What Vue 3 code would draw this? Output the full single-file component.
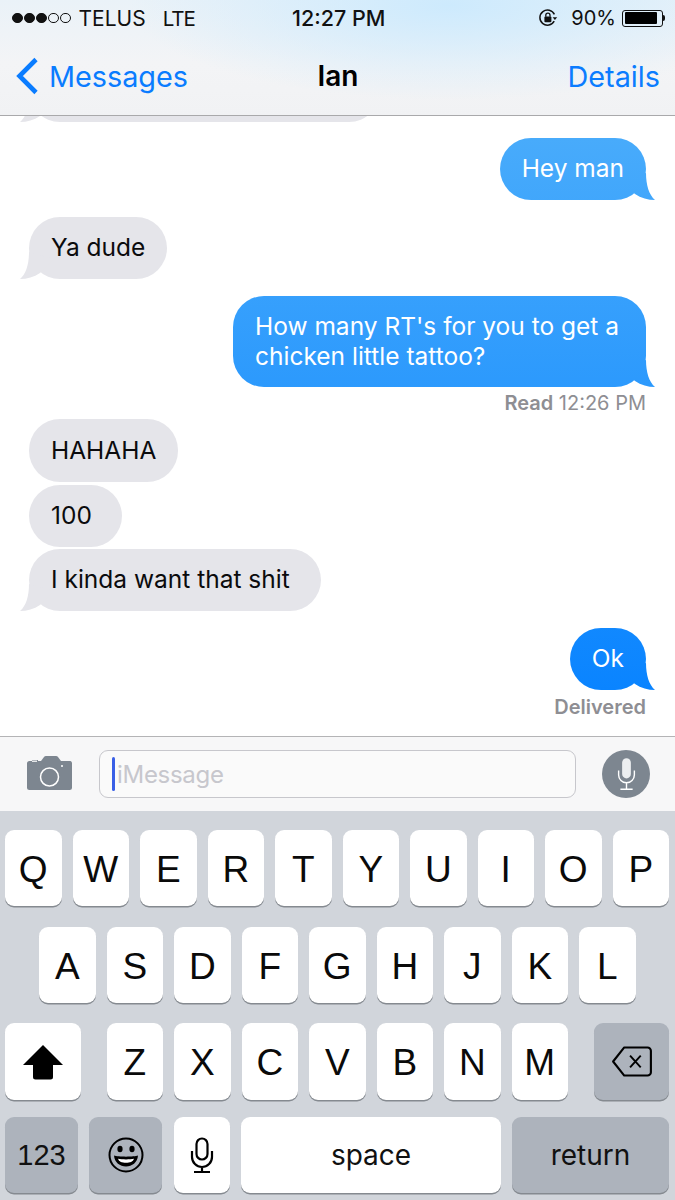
<script setup>
const row1 = ['Q','W','E','R','T','Y','U','I','O','P']
const row2 = ['A','S','D','F','G','H','J','K','L']
const row3 = ['Z','X','C','V','B','N','M']
</script>

<template>
  <div class="phone">
    <header class="top">
      <div class="status">
        <div class="status-left">
          <span class="signal">
            <i class="dot on"></i><i class="dot on"></i><i class="dot on"></i><i class="dot"></i><i class="dot"></i>
          </span>
          <span class="carrier">TELUS</span>
          <span class="lte">LTE</span>
        </div>
        <div class="clock">12:27 PM</div>
        <div class="status-right">
          <svg class="lock" width="20" height="20" viewBox="0 0 20 20">
            <path d="M16.2 13.2A7.6 7.6 0 1 1 16.4 6.4" fill="none" stroke="#111" stroke-width="1.5"/>
            <path d="M14.6 9.2h4.6l-2.3 2.8z" fill="#111"/>
            <rect x="6.4" y="8.6" width="7" height="5.6" rx="1" fill="#111"/>
            <path d="M7.8 8.8V7.2a2.1 2.1 0 0 1 4.2 0v1.6" fill="none" stroke="#111" stroke-width="1.3"/>
          </svg>
          <span class="pct">90%</span>
          <span class="battery"><span class="level"></span></span>
          <span class="nub"></span>
        </div>
      </div>
      <nav class="nav">
        <div class="back">
          <svg width="24" height="38" viewBox="0 0 24 38">
            <path d="M21 2.5 4.5 19 21 35.5" fill="none" stroke="#0a7cff" stroke-width="4.6"/>
          </svg>
          <span>Messages</span>
        </div>
        <div class="title">Ian</div>
        <div class="details">Details</div>
      </nav>
    </header>

    <main class="messages">
      <div class="bubble them cut"></div>
      <div class="bubble me m-hey">Hey man</div>
      <div class="bubble them m-ya">Ya dude</div>
      <div class="bubble me m-many">How many RT's for you to get a<br>chicken little tattoo?</div>
      <div class="receipt m-read"><b>Read</b> 12:26 PM</div>
      <div class="bubble them plain m-ha">HAHAHA</div>
      <div class="bubble them plain m-100">100</div>
      <div class="bubble them m-kinda">I kinda want that shit</div>
      <div class="bubble me m-ok">Ok</div>
      <div class="receipt m-del"><b>Delivered</b></div>
    </main>

    <section class="composer">
      <svg class="camera" width="45" height="34" viewBox="0 0 45 34">
        <path d="M2.500 5H5V4h6v1h3l3-4q.6-1 2-1h10q1.400 0 2 1l3 4h9.500A2.500 2.500 0 0 1 45 7.500v24a2.500 2.500 0 0 1-2.500 2.500h-40A2.500 2.500 0 0 1 0 31.500v-24A2.500 2.500 0 0 1 2.500 5z" fill="#7d8690"/>
        <rect x="5" y="4.600" width="5" height="1.200" fill="#fff"/>
        <circle cx="22.500" cy="21" r="9" fill="none" stroke="#fff" stroke-width="1.500"/>
        <circle cx="35" cy="10" r="1" fill="#fff"/>
      </svg>
      <div class="field">
        <span class="caret"></span>
        <span class="placeholder">iMessage</span>
      </div>
      <div class="voice">
        <svg width="21" height="34" viewBox="0 0 24 38">
          <rect x="7" y="1" width="10" height="23" rx="5" fill="#eceef0"/>
          <path d="M3 15v5a9 9 0 0 0 18 0v-5M12 29v7M5 36.500h14" fill="none" stroke="#fff" stroke-width="1.600"/>
        </svg>
      </div>
    </section>

    <section class="keyboard">
      <div class="row r1">
        <div v-for="k in row1" :key="k" class="key letter">{{ k }}</div>
      </div>
      <div class="row r2">
        <div v-for="k in row2" :key="k" class="key letter">{{ k }}</div>
      </div>
      <div class="row r3">
        <div class="key shift">
          <svg width="40" height="36" viewBox="0 0 40 36">
            <path d="M20 1 40 21H30v12a2.500 2.500 0 0 1-2.500 2.500h-15A2.500 2.500 0 0 1 10 33V21H0z" fill="#000"/>
          </svg>
        </div>
        <div class="letters">
          <div v-for="k in row3" :key="k" class="key letter">{{ k }}</div>
        </div>
        <div class="key dark del">
          <svg width="42" height="31" viewBox="0 0 42 32">
            <path d="M13 1.500h24a3.500 3.500 0 0 1 3.500 3.500v22a3.500 3.500 0 0 1-3.500 3.500H13L1.500 16z" fill="none" stroke="#000" stroke-width="2.200" stroke-linejoin="round"/>
            <path d="M19 10 30 22M30 10 19 22" stroke="#000" stroke-width="2" fill="none"/>
          </svg>
        </div>
      </div>
      <div class="row r4">
        <div class="key dark num">123</div>
        <div class="key dark emoji">
          <svg width="36" height="36" viewBox="0 0 36 36">
            <circle cx="18" cy="18" r="16.500" fill="none" stroke="#000" stroke-width="2"/>
            <ellipse cx="12" cy="12" rx="2.600" ry="3.300" fill="#000"/>
            <ellipse cx="24" cy="12" rx="2.600" ry="3.300" fill="#000"/>
            <path d="M6 18.500c4 1.500 20 1.500 24 0-.5 7-6 11-12 11s-11.500-4-12-11z" fill="#000"/>
            <path d="M10 21.800c4 .8 12 .8 16 0-1 3-4 4-8 4s-7-1-8-4z" fill="#fff"/>
          </svg>
        </div>
        <div class="key mic">
          <svg width="24" height="36" viewBox="0 0 24 36">
            <rect x="6.500" y="1.500" width="11" height="21" rx="5.500" fill="none" stroke="#000" stroke-width="2.200"/>
            <path d="M2 14v6a10 10 0 0 0 20 0v-6M12 30v5M4 35h16" fill="none" stroke="#000" stroke-width="2.200"/>
          </svg>
        </div>
        <div class="key space">space</div>
        <div class="key dark ret">return</div>
      </div>
    </section>
  </div>
</template>

<style>
html, body { margin: 0; background: #fff; }
</style>

<style scoped>
.phone {
  width: 675px;
  height: 1200px;
  overflow: hidden;
  display: flex;
  flex-direction: column;
  font-family: Inter, "Liberation Sans", sans-serif;
  color: #000;
  background: #fff;
}

/* top bar */
.top {
  height: 115px;
  flex: none;
  border-bottom: 1px solid #a9a9ab;
  background:
    radial-gradient(ellipse 320px 95px at 450px 5px, #cdeafd 0%, rgba(205,234,253,0) 100%),
    linear-gradient(#eaf2f8, #f3f4f6 55%, #f1f2f4);
  position: relative;
  z-index: 2;
}
.status {
  height: 36px;
  display: flex;
  align-items: center;
  justify-content: space-between;
  padding: 0 10px 0 12px;
  position: relative;
  font-size: 20px;
  color: #111;
}
.status-left, .status-right { display: flex; align-items: center; }
.signal { display: flex; gap: 1.500px; margin-right: 8px; }
.dot {
  width: 10.500px;
  height: 10.500px;
  border-radius: 50%;
  box-sizing: border-box;
  border: 1px solid #111;
}
.dot.on { background: #111; }
.carrier { margin-right: 17px; font-size: 21px; }
.lte { font-size: 20.500px; letter-spacing: -1px; }
.clock {
  position: absolute;
  left: 292px;
  font-weight: 500;
  font-size: 21.500px;
}
.lock { margin-right: 13px; }
.pct { margin-right: 6px; }
.battery {
  width: 41px;
  height: 17px;
  box-sizing: border-box;
  border: 1px solid #111;
  border-radius: 3px;
  padding: 1.500px;
  display: flex;
}
.level { width: 90%; background: #000; border-radius: 1px; }
.nub { width: 2px; height: 6px; background: #111; border-radius: 0 2px 2px 0; }

.nav {
  height: 79px;
  box-sizing: border-box;
  padding: 1px 15px 0 15px;
  display: flex;
  align-items: center;
  justify-content: space-between;
  position: relative;
  color: #0a7cff;
  font-size: 28.800px;
}
.back { display: flex; align-items: center; gap: 10px; }
.title {
  position: absolute;
  left: 0;
  right: 0;
  margin-left: 1px;
  text-align: center;
  color: #000;
  font-weight: 600;
  font-size: 28px;
}

/* messages */
.messages {
  height: 620px;
  flex: none;
  box-sizing: border-box;
  padding: 0 29px;
  display: flex;
  flex-direction: column;
  overflow: hidden;
  background: #fff;
}
.bubble {
  position: relative;
  box-sizing: border-box;
  border-radius: 31px;
  padding: 15px 22px 17px;
  font-size: 24.500px;
  line-height: 30px;
}
.bubble::after {
  content: "";
  position: absolute;
  bottom: 0;
  width: 40px;
  height: 30px;
  background: inherit;
}
.them {
  align-self: flex-start;
  background: #e5e5ea;
  color: #0b0b0d;
}
.them::after {
  left: -9px;
  clip-path: path("M9 3C9 15 6 25 0 30C7 30 14 28 20 24L34 10Z");
}
.them.plain::after { display: none; }
.me {
  align-self: flex-end;
  color: #fff;
  background: linear-gradient(#48abfb 138px, #0a84ff 690px) fixed;
}
.me::after {
  right: -9px;
  clip-path: path("M31 3C31 15 34 25 40 30C33 30 26 28 20 24L6 10Z");
}
.cut { width: 351px; height: 62px; margin-top: -56px; }
.m-hey { margin-top: 16px; }
.m-ya { margin-top: 17px; }
.m-many { margin-top: 17px; padding: 15px 27px 16px 22px; }
.m-ha { margin-top: 4px; padding-top: 16px; }
.m-100 { margin-top: 3px; padding-right: 30px; }
.m-kinda { margin-top: 2px; padding-right: 31px; }
.m-ok { margin-top: 17px; }
.receipt {
  align-self: flex-end;
  font-size: 20px;
  line-height: 24px;
  color: #8e8e93;
}
.receipt b { font-weight: 600; }
.m-read { margin-top: 4px; }
.m-del { margin-top: 5px; }

/* composer */
.composer {
  height: 75px;
  flex: none;
  box-sizing: border-box;
  border-top: 1px solid #b4b4b6;
  background: #f7f7f8;
  padding: 0 25px 0 27px;
  display: flex;
  align-items: center;
  position: relative;
}
.camera { margin-right: 27px; margin-top: -2px; }
.field {
  width: 477px;
  height: 48px;
  box-sizing: border-box;
  margin-right: 26px;
  border: 1px solid #c7c7cc;
  border-radius: 9px;
  background: #fafafa;
  display: flex;
  align-items: center;
  position: relative;
  padding-left: 17px;
}
.placeholder { color: #c7c7cd; font-size: 24px; letter-spacing: -0.3px; }
.caret {
  position: absolute;
  left: 12px;
  top: 6px;
  width: 3px;
  height: 34px;
  border-radius: 2px;
  background: #3a5fe6;
}
.voice {
  width: 48px;
  height: 48px;
  flex: none;
  border-radius: 50%;
  background: #7d8690;
  display: flex;
  align-items: center;
  justify-content: center;
}

/* keyboard */
.keyboard {
  flex: 1;
  background: #d1d5db;
  padding: 19px 6px 0 5px;
  display: flex;
  flex-direction: column;
}
.row { display: flex; justify-content: space-between; height: 76px; flex: none; }
.r2 { margin-top: 21px; padding-left: 34px; gap: 11px; justify-content: flex-start; }
.r3 { margin-top: 20px; height: 77px; justify-content: flex-start; }
.r4 { margin-top: 17px; justify-content: flex-start; }
.letters { display: flex; gap: 11px; margin-left: 25.500px; }
.key {
  height: 100%;
  box-sizing: border-box;
  border-radius: 9px;
  background: #fff;
  box-shadow: 0 1.500px 0 #858a90;
  display: flex;
  align-items: center;
  justify-content: center;
  color: #000;
  font-family: "Liberation Sans", Arial, sans-serif;
}
.letter { width: 56.500px; font-size: 37px; padding-top: 3px; color: #0a0a0a; }
.dark { background: #adb3bc; }
.shift { width: 76px; }
.del { width: 75px; margin-left: auto; }
.num { width: 73px; margin-right: 11px; font-size: 29px; color: #111; padding-top: 1px; }
.emoji { width: 73px; margin-right: 12px; }
.mic { width: 56px; margin-right: 11px; }
.space { width: 260px; margin-right: 11px; font-size: 28px; font-family: Inter, sans-serif; color: #111; }
.ret { width: 157px; font-size: 28px; font-family: Inter, sans-serif; color: #111; }
</style>
